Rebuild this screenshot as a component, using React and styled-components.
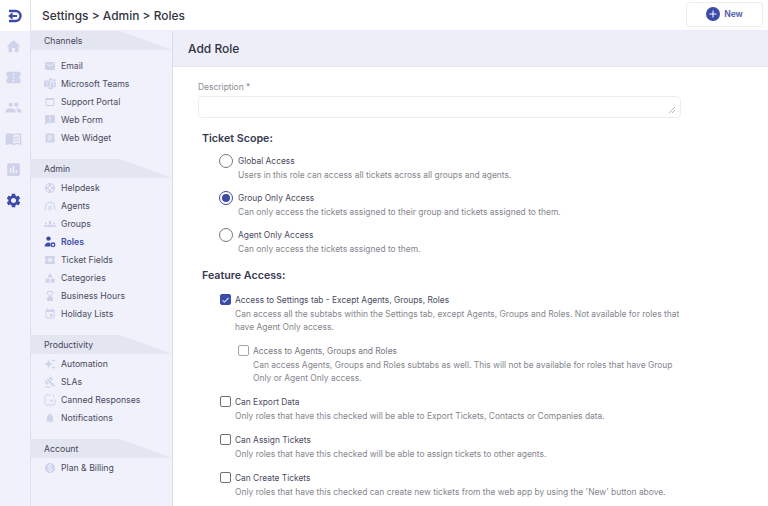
import React from "react"
import styled, { createGlobalStyle } from "styled-components"
import {
  MdHome,
  MdConfirmationNumber,
  MdPeople,
  MdMenuBook,
  MdAssessment,
  MdSettings,
  MdEmail,
  MdWebAsset,
  MdAnnouncement,
  MdArticle,
  MdSupport,
  MdGroups,
  MdLocalActivity,
  MdCategory,
  MdHourglassBottom,
  MdEvent,
  MdAutoAwesome,
  MdGavel,
  MdNotifications,
  MdMonetizationOn,
  MdCheck,
  MdAdd,
} from "react-icons/md"
import { BsMicrosoftTeams } from "react-icons/bs"

const GlobalStyle = createGlobalStyle`
  html, body {
    margin: 0;
    height: 100%;
    overflow: hidden;
    background: #fff;
    font-family: Inter, "Liberation Sans", sans-serif;
  }
  * { box-sizing: border-box; }
`

const Shell = styled.div`
  display: flex;
  height: 506px;
  width: 768px;
  overflow: hidden;
`

const Rail = styled.nav`
  width: 31px;
  flex: none;
  display: flex;
  flex-direction: column;
  align-items: center;
  background: #f0f1fa;
  border-right: 1px solid #dfe1f0;
`

const LogoCell = styled.div`
  width: 100%;
  height: 31px;
  background: #fff;
  display: flex;
  align-items: center;
  justify-content: center;
`

const RailButton = styled.div`
  height: 30.8px;
  width: 100%;
  display: flex;
  align-items: center;
  justify-content: center;
  padding-right: 3px;
  color: ${({ $active }) => ($active ? "#3c4aa8" : "#cfd3ea")};
  font-size: 17px;
`

const Column = styled.div`
  flex: 1;
  min-width: 0;
  display: flex;
  flex-direction: column;
`

const TopBar = styled.header`
  height: 31px;
  flex: none;
  display: flex;
  align-items: center;
  justify-content: space-between;
  padding: 0 5px 0 11px;
  background: #fff;
  border-bottom: 1px solid #eceef6;
`

const Crumbs = styled.div`
  font-size: 11.95px;
  font-weight: 500;
  color: #33353f;
`

const NewButton = styled.button`
  width: 77px;
  height: 25px;
  margin-top: -2px;
  display: flex;
  align-items: center;
  justify-content: center;
  gap: 4px;
  background: #fff;
  border: 1px solid #eceded;
  border-radius: 3px;
  font-family: inherit;
  font-size: 8.6px;
  font-weight: 600;
  color: #4c58a8;
`

const PlusDot = styled.span`
  width: 14px;
  height: 14px;
  border-radius: 50%;
  background: #3c4aa8;
  color: #fff;
  display: flex;
  align-items: center;
  justify-content: center;
  font-size: 12px;
`

const Body = styled.div`
  flex: 1;
  min-height: 0;
  display: flex;
`

const Sidebar = styled.aside`
  width: 142px;
  flex: none;
  background: #f0f1fa;
  border-right: 1px solid #d9dcf0;
`

const Section = styled.section`
  margin-bottom: ${({ $last }) => ($last ? 0 : "13px")};
`

const SectionHead = styled.div`
  height: 19px;
  display: flex;
  align-items: center;
  padding-left: 13px;
  margin-bottom: ${({ $gap }) => ($gap ? "6px" : 0)};
  background: #e3e5f1;
  clip-path: polygon(0 0, 63% 0, 100% 100%, 0 100%);
  font-size: 8.7px;
  color: #44465a;
`

const NavRow = styled.div`
  height: 18px;
  display: flex;
  align-items: center;
  padding: 2px 0 0 13px;
  gap: 5px;
  font-size: 8.7px;
  font-weight: ${({ $active }) => ($active ? 600 : 400)};
  color: ${({ $active }) => ($active ? "#3f4cab" : "#494b5e")};
`

const NavIcon = styled.span`
  width: 12px;
  height: 12px;
  flex: none;
  display: flex;
  align-items: center;
  justify-content: center;
  font-size: 14px;
  color: ${({ $active }) => ($active ? "#3c4aa8" : "#cfd3ea")};
`

const Main = styled.main`
  flex: 1;
  min-width: 0;
  background: #fff;
`

const TitleBar = styled.div`
  height: 36px;
  display: flex;
  align-items: center;
  padding-left: 15px;
  background: #edeef8;
  border-bottom: 1px solid #e3e5f1;
  font-size: 12px;
  font-weight: 500;
  color: #303240;
`

const Form = styled.form`
  padding: 15px 0 0 25px;
`

const FieldLabel = styled.div`
  height: 11px;
  line-height: 11px;
  font-size: 8.45px;
  color: #8a8b93;
  margin-bottom: 3px;
`

const TextBox = styled.div`
  position: relative;
  width: 483px;
  height: 22px;
  border: 1px solid #eceded;
  border-radius: 4px;
`

const Resizer = styled.svg`
  position: absolute;
  right: 5px;
  bottom: 4px;
  width: 6px;
  height: 6px;
`

const Heading = styled.h2`
  margin: ${({ $top }) => $top} 0 0 4px;
  height: 15px;
  line-height: 15px;
  font-size: 10.7px;
  font-weight: 600;
  color: #373952;
`

const Options = styled.div`
  display: flex;
  flex-direction: column;
  margin-top: ${({ $top }) => $top};
  padding-left: ${({ $indent }) => $indent};
  gap: ${({ $gap }) => $gap};
`

const Option = styled.div`
  display: flex;
  gap: ${({ $gap }) => $gap || "5px"};
  align-items: flex-start;
`

const RadioMark = styled.span`
  width: 14px;
  height: 14px;
  flex: none;
  margin-top: -1px;
  border-radius: 50%;
  border: 1.3px solid ${({ $on }) => ($on ? "#3c4aa8" : "#77777c")};
  display: flex;
  align-items: center;
  justify-content: center;
  &::after {
    content: "";
    width: 8px;
    height: 8px;
    border-radius: 50%;
    background: ${({ $on }) => ($on ? "#3c4aa8" : "transparent")};
  }
`

const CheckMark = styled.span`
  width: 11px;
  height: 11px;
  flex: none;
  margin: 0 0 0 ${({ $shift }) => $shift || 0};
  border-radius: 2px;
  border: 1.2px solid ${({ $on, $soft }) => ($on ? "#3c4aa8" : $soft ? "#a5a5aa" : "#6f6f74")};
  background: ${({ $on }) => ($on ? "#3c4aa8" : "#fff")};
  color: #fff;
  display: flex;
  align-items: center;
  justify-content: center;
  font-size: 10px;
`

const OptionText = styled.div`
  min-width: 0;
  width: ${({ $width }) => $width};
`

const OptionTitle = styled.div`
  height: 12px;
  line-height: 12px;
  font-size: 8.4px;
  color: ${({ $soft }) => ($soft ? "#77787f" : "#494b5e")};
`

const OptionHelp = styled.div`
  margin-top: 2px;
  line-height: 13px;
  font-size: 8.45px;
  color: #85868d;
`

const LogoMark = () => (
  <svg width="16" height="14" viewBox="0 0 16 14" fill="none">
    <path d="M2 2h6.500a5 5 0 0 1 0 10H2" stroke="#3c4aa8" strokeWidth="2.4" />
    <path d="M10 7H3M5.500 4.400 2.600 7l2.900 2.600" stroke="#3c4aa8" strokeWidth="1.8" />
  </svg>
)

const RolesIcon = () => (
  <svg width="12" height="12" viewBox="0 0 12 12" fill="currentColor">
    <circle cx="4.500" cy="2.600" r="2.200" />
    <path d="M.6 10.600c0-2.600 1.600-4.200 3.900-4.200.8 0 1.400.2 2 .5v3.700z" />
    <circle cx="9" cy="8.800" r="1.800" fill="none" stroke="currentColor" strokeWidth="1.3" />
  </svg>
)

const AgentIcon = () => (
  <svg width="13" height="13" viewBox="0 0 13 13" fill="none" stroke="currentColor">
    <path d="M1.500 10.500V7a5 5 0 0 1 10 0v3.500" strokeWidth="1.2" />
    <path d="M4 7c1.500 0 3-1 3.500-2 .5 1 1 1.500 1.500 2v1.500a2.500 2.500 0 0 1-5 0z" fill="currentColor" opacity=".55" stroke="none" />
  </svg>
)

const CannedIcon = () => (
  <svg width="12" height="12" viewBox="0 0 12 12" fill="none" stroke="currentColor">
    <path d="M7 1H2.500A1.500 1.500 0 0 0 1 2.500v7A1.500 1.500 0 0 0 2.500 11h7A1.500 1.500 0 0 0 11 9.500V5" />
    <path d="M9.500.5v3M6 6.500h3M7.500 5v3" strokeWidth=".9" />
  </svg>
)

const railItems = [
  { icon: <MdHome /> },
  { icon: <MdConfirmationNumber /> },
  { icon: <MdPeople /> },
  { icon: <MdMenuBook /> },
  { icon: <MdAssessment /> },
  { icon: <MdSettings />, active: true },
]

const sections = [
  {
    title: "Channels",
    gap: true,
    items: [
      { label: "Email", icon: <MdEmail /> },
      { label: "Microsoft Teams", icon: <BsMicrosoftTeams /> },
      { label: "Support Portal", icon: <MdWebAsset /> },
      { label: "Web Form", icon: <MdAnnouncement /> },
      { label: "Web Widget", icon: <MdArticle /> },
    ],
  },
  {
    title: "Admin",
    items: [
      { label: "Helpdesk", icon: <MdSupport /> },
      { label: "Agents", icon: <AgentIcon /> },
      { label: "Groups", icon: <MdGroups /> },
      { label: "Roles", icon: <RolesIcon />, active: true },
      { label: "Ticket Fields", icon: <MdLocalActivity /> },
      { label: "Categories", icon: <MdCategory /> },
      { label: "Business Hours", icon: <MdHourglassBottom /> },
      { label: "Holiday Lists", icon: <MdEvent /> },
    ],
  },
  {
    title: "Productivity",
    items: [
      { label: "Automation", icon: <MdAutoAwesome /> },
      { label: "SLAs", icon: <MdGavel /> },
      { label: "Canned Responses", icon: <CannedIcon /> },
      { label: "Notifications", icon: <MdNotifications /> },
    ],
  },
  {
    title: "Account",
    items: [{ label: "Plan & Billing", icon: <MdMonetizationOn /> }],
  },
]

const scopes = [
  {
    title: "Global Access",
    help: "Users in this role can access all tickets across all groups and agents.",
  },
  {
    title: "Group Only Access",
    help: "Can only access the tickets assigned to their group and tickets assigned to them.",
    on: true,
  },
  {
    title: "Agent Only Access",
    help: "Can only access the tickets assigned to them.",
  },
]

const features = [
  {
    title: "Can Export Data",
    help: "Only roles that have this checked will be able to Export Tickets, Contacts or Companies data.",
  },
  {
    title: "Can Assign Tickets",
    help: "Only roles that have this checked will be able to assign tickets to other agents.",
  },
  {
    title: "Can Create Tickets",
    help: "Only roles that have this checked can create new tickets from the web app by using the 'New' button above.",
  },
]

const App = () => (
  <Shell>
    <GlobalStyle />
    <Rail>
      <LogoCell>
        <LogoMark />
      </LogoCell>
      {railItems.map((item, i) => (
        <RailButton key={i} $active={item.active}>
          {item.icon}
        </RailButton>
      ))}
    </Rail>
    <Column>
      <TopBar>
        <Crumbs>Settings &gt; Admin &gt; Roles</Crumbs>
        <NewButton type="button">
          <PlusDot>
            <MdAdd />
          </PlusDot>
          New
        </NewButton>
      </TopBar>
      <Body>
        <Sidebar>
          {sections.map((section, i) => (
            <Section key={section.title} $last={i === sections.length - 1}>
              <SectionHead $gap={section.gap}>{section.title}</SectionHead>
              {section.items.map((item) => (
                <NavRow key={item.label} $active={item.active}>
                  <NavIcon $active={item.active}>{item.icon}</NavIcon>
                  {item.label}
                </NavRow>
              ))}
            </Section>
          ))}
        </Sidebar>
        <Main>
          <TitleBar>Add Role</TitleBar>
          <Form>
            <FieldLabel>Description *</FieldLabel>
            <TextBox>
              <Resizer viewBox="0 0 6 6">
                <path d="M0 6 6 0M3 6l3-3" stroke="#999" strokeWidth=".7" />
              </Resizer>
            </TextBox>
            <Heading $top="13px">Ticket Scope:</Heading>
            <Options $top="9px" $indent="21px" $gap="10px">
              {scopes.map((scope) => (
                <Option key={scope.title}>
                  <RadioMark $on={scope.on} />
                  <OptionText>
                    <OptionTitle>{scope.title}</OptionTitle>
                    <OptionHelp>{scope.help}</OptionHelp>
                  </OptionText>
                </Option>
              ))}
            </Options>
            <Heading $top="12px">Feature Access:</Heading>
            <Options $top="11px" $indent="22px" $gap="11px">
              <Option $gap="4px">
                <CheckMark $on>
                  <MdCheck />
                </CheckMark>
                <OptionText $width="450px">
                  <OptionTitle>Access to Settings tab - Except Agents, Groups, Roles</OptionTitle>
                  <OptionHelp>
                    Can access all the subtabs within the Settings tab, except Agents, Groups and Roles. Not available for roles that have Agent Only access.
                  </OptionHelp>
                </OptionText>
              </Option>
              <Option $gap="4px">
                <CheckMark $soft $shift="18px" />
                <OptionText $width="430px">
                  <OptionTitle $soft>Access to Agents, Groups and Roles</OptionTitle>
                  <OptionHelp>
                    Can access Agents, Groups and Roles subtabs as well. This will not be available for roles that have Group Only or Agent Only access.
                  </OptionHelp>
                </OptionText>
              </Option>
              {features.map((feature) => (
                <Option key={feature.title} $gap="4px">
                  <CheckMark />
                  <OptionText $width="470px">
                    <OptionTitle>{feature.title}</OptionTitle>
                    <OptionHelp>{feature.help}</OptionHelp>
                  </OptionText>
                </Option>
              ))}
            </Options>
          </Form>
        </Main>
      </Body>
    </Column>
  </Shell>
)

export default App
